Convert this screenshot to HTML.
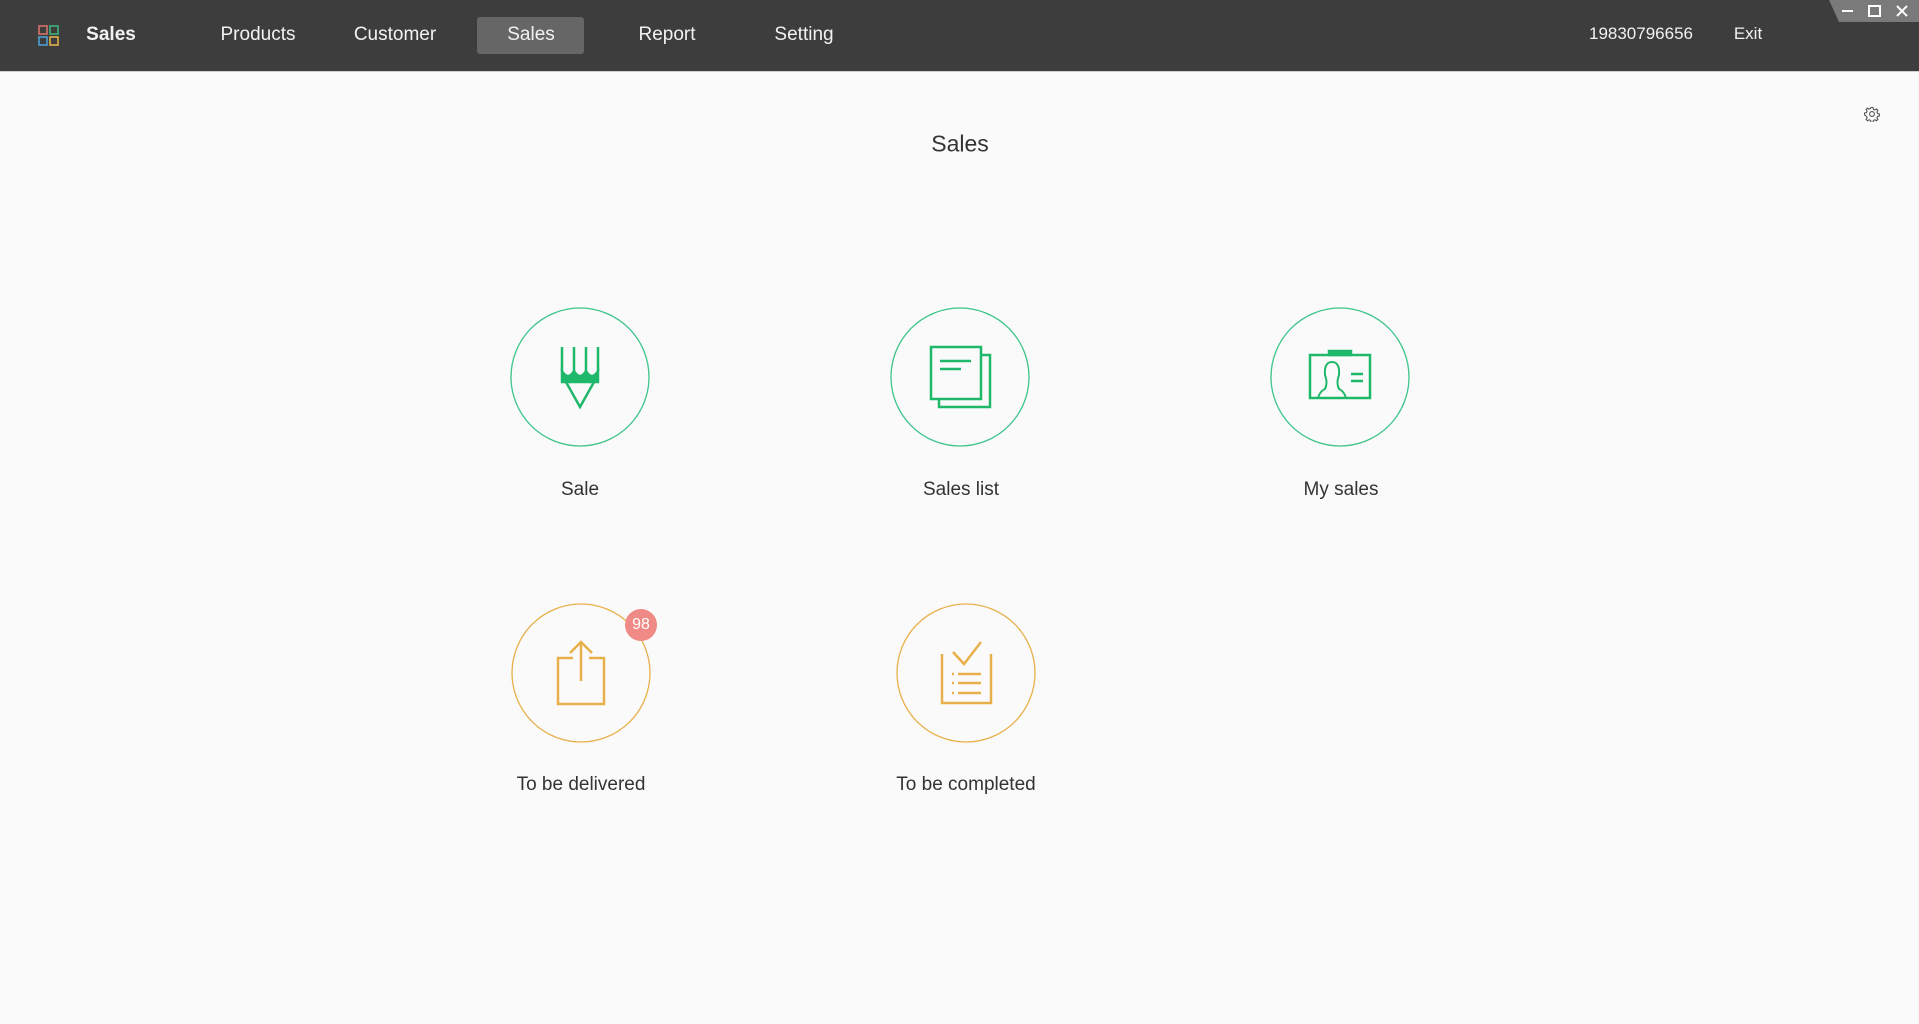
<!DOCTYPE html>
<html><head><meta charset="utf-8"><style>
*{margin:0;padding:0;box-sizing:border-box}
body{width:1919px;height:1024px;background:#fafafa;font-family:"Segoe UI","Liberation Sans",sans-serif;position:relative;overflow:hidden;color:#333}
.bar{position:absolute;left:0;top:0;width:1919px;height:72px;background:#3d3d3d;border-bottom:1px solid #cfcfcf}
.t{position:absolute;color:#f2f2f2;font-size:19px;transform:translate(-50%,-50%);white-space:nowrap}
.tab{position:absolute;left:477px;top:17px;width:107px;height:37px;background:#666;border-radius:3px}
.win{position:absolute;right:0;top:0;width:104px;height:22px;background:#7a7a7a;clip-path:polygon(14px 0,100% 0,100% 100%,24px 100%)}
.lbl{position:absolute;transform:translate(-50%,-50%);font-size:19px;color:#333;white-space:nowrap}
svg.c{position:absolute;width:142px;height:142px}
</style></head><body>
<div class="bar"></div>
<svg style="position:absolute;left:38px;top:25px" width="22" height="22" viewBox="0 0 22 22" fill="none" stroke-width="1.6">
<rect x="1" y="1" width="8" height="8" stroke="#d7716a"/><rect x="12" y="1" width="8" height="8" stroke="#3fb27a"/>
<rect x="1" y="12" width="8" height="8" stroke="#4d9fd0"/><rect x="12" y="12" width="8" height="8" stroke="#e0b04a"/></svg>
<div class="t" style="left:111px;top:35px;font-weight:bold">Sales</div>
<div class="tab"></div>
<div class="t" style="left:258px;top:35px">Products</div>
<div class="t" style="left:395px;top:35px">Customer</div>
<div class="t" style="left:531px;top:35px">Sales</div>
<div class="t" style="left:667px;top:35px">Report</div>
<div class="t" style="left:804px;top:35px">Setting</div>
<div class="t" style="left:1641px;top:34px;font-size:17px">19830796656</div>
<div class="t" style="left:1748px;top:34px;font-size:17px">Exit</div>
<div class="win"></div>
<svg style="position:absolute;left:1838px;top:4px" width="78" height="14" viewBox="0 0 78 14" stroke="#fff" stroke-width="2" fill="none">
<line x1="4" y1="7" x2="15" y2="7"/><rect x="31" y="2" width="11" height="10"/><path d="M59 2L69 12M69 2L59 12"/></svg>
<svg style="position:absolute;left:1864px;top:106px" width="16" height="16" viewBox="0 0 16 16" fill="none" stroke="#555" stroke-width="1.1">
<circle cx="8" cy="8" r="2.4"/><path d="M7 1.5h2l.4 1.8 1.5.7 1.6-1 1.4 1.4-1 1.6.7 1.5 1.8.4v2l-1.8.4-.7 1.5 1 1.6-1.4 1.4-1.6-1-1.5.7-.4 1.8H7l-.4-1.8-1.5-.7-1.6 1-1.4-1.4 1-1.6-.7-1.5L.6 9V7l1.8-.4.7-1.5-1-1.6 1.4-1.4 1.6 1 1.5-.7z"/></svg>
<div class="lbl" style="left:960px;top:144px;font-size:23px">Sales</div>

<!-- Sale -->
<svg class="c" style="left:509px;top:306px" viewBox="-71 -71 142 142" fill="none" stroke="#1fb86a" stroke-width="2.5">
<circle r="69" stroke="#3cc48a" stroke-width="1.3"/>
<path d="M-18 -30V-6M-6 -30V-6M6 -30V-6M18 -30V-6"/>
<path d="M-18 -6Q-12 4 -6 -6Q0 4 6 -6Q12 4 18 -6L18 5H-18Z" fill="#1fb86a"/>
<path d="M-14 5L0 30L14 5"/></svg>
<div class="lbl" style="left:580px;top:490px">Sale</div>

<!-- Sales list -->
<svg class="c" style="left:889px;top:306px" viewBox="-71 -71 142 142" fill="none" stroke="#1fb86a" stroke-width="2.5">
<circle r="69" stroke="#3cc48a" stroke-width="1.3"/>
<path d="M21 -22H30V30H-21V22"/><rect x="-29" y="-30" width="50" height="52"/>
<path d="M-20 -16H11M-20 -8H1"/></svg>
<div class="lbl" style="left:961px;top:490px">Sales list</div>

<!-- My sales -->
<svg class="c" style="left:1269px;top:306px" viewBox="-71 -71 142 142" fill="none" stroke="#1fb86a" stroke-width="2.5">
<circle r="69" stroke="#3cc48a" stroke-width="1.3"/>
<rect x="-30" y="-22" width="60" height="43"/>
<rect x="-11" y="-26" width="22" height="4" fill="#1fb86a"/>
<path d="M-22 21Q-20 14 -15 12Q-12 6 -15 -2Q-16 -15 -8 -15Q0 -15 -1 -2Q-4 6 -1 12Q4 14 6 21" stroke-width="2"/>
<path d="M11 -3H23M11 4H23"/></svg>
<div class="lbl" style="left:1341px;top:490px">My sales</div>

<!-- To be delivered -->
<svg class="c" style="left:510px;top:602px" viewBox="-71 -71 142 142" fill="none" stroke="#e8b04a" stroke-width="2.5">
<circle r="69" stroke-width="1.3"/>
<path d="M-8 -15H-23V31H23V-15H8"/><path d="M0 8V-31M-11 -20L0 -31L11 -20"/></svg>
<div style="position:absolute;left:625px;top:609px;width:32px;height:32px;border-radius:50%;background:#f08a86;color:#fff;font-size:16px;text-align:center;line-height:32px">98</div>
<div class="lbl" style="left:581px;top:785px">To be delivered</div>

<!-- To be completed -->
<svg class="c" style="left:895px;top:602px" viewBox="-71 -71 142 142" fill="none" stroke="#e8b04a" stroke-width="2.5">
<circle r="69" stroke-width="1.3"/>
<path d="M-24 -19V30H25V-19"/><path d="M-13 -21L-2 -9L15 -31"/>
<path d="M-8 1H15M-8 10H15M-8 20H15M-14 1h2M-14 10h2M-14 20h2"/></svg>
<div class="lbl" style="left:966px;top:785px">To be completed</div>
</body></html>
